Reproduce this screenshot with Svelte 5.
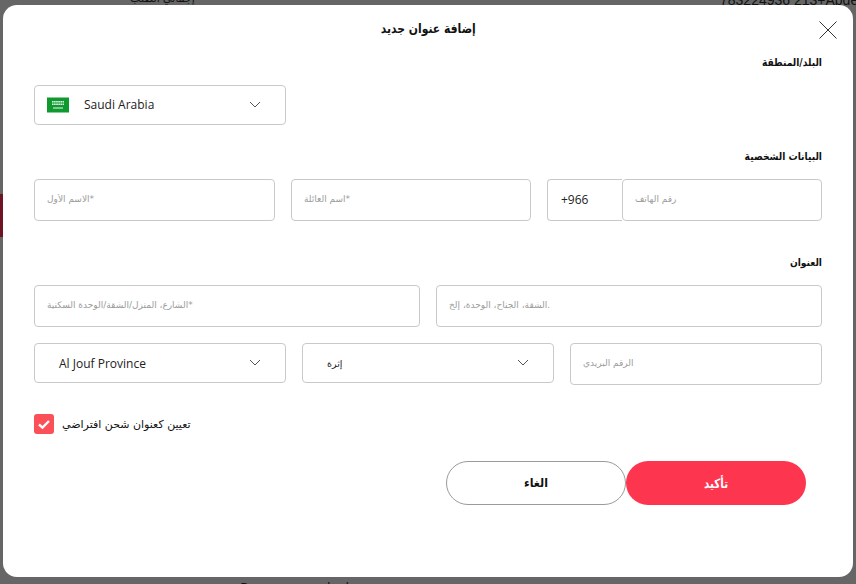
<script>
  const chevron = 'M1 1l5 5 5-5';
</script>

<div class="page">
  <div class="behind" aria-hidden="true">
    <span class="b b1" dir="rtl">إجمالي الطلب</span>
    <span class="b b2">783224936 213+Abde</span>
    <span class="b b3">Recommended</span>
    <i class="strip"></i>
  </div>

  <div class="modal">
    <header class="head">
      <h1 dir="rtl">إضافة عنوان جديد</h1>
      <button class="close" aria-label="إغلاق">
        <svg width="18" height="18" viewBox="0 0 18 18"><path d="M.5.5l17 17M17.5.5l-17 17" stroke="#333" stroke-width="1" fill="none"/></svg>
      </button>
    </header>

    <section class="form">
      <h2 class="l1" dir="rtl">البلد/المنطقة</h2>
      <div class="row r-country">
        <div class="select country">
          <svg class="flag" width="22" height="16" viewBox="0 0 22 16">
            <rect width="22" height="15" y=".5" fill="#0f9a30"/>
            <path d="M5 4.5h12M5 6h12M5 7.5h12" stroke="#e6f6e8" stroke-width="1" stroke-dasharray="1.6 .5" fill="none"/>
            <path d="M6 11h10" stroke="#eef8ef" stroke-width="1" fill="none"/>
          </svg>
          <span class="val up">Saudi Arabia</span>
          <svg class="chev" width="12" height="7" viewBox="0 0 12 7"><path d={chevron} stroke="#555" fill="none"/></svg>
        </div>
      </div>

      <h2 class="l2" dir="rtl">البيانات الشخصية</h2>
      <div class="row r-name">
        <input class="field first" dir="rtl" placeholder="*الاسم الأول" />
        <input class="field family" dir="rtl" placeholder="*اسم العائلة" />
        <div class="phone">
          <span class="code">+966</span>
          <input class="field num" dir="rtl" placeholder="رقم الهاتف" />
        </div>
      </div>

      <h2 class="l3" dir="rtl">العنوان</h2>
      <div class="row r-addr">
        <input class="field half" dir="rtl" placeholder="*الشارع، المنزل/الشقة/الوحدة السكنية" />
        <input class="field half" dir="rtl" placeholder=".الشقة، الجناح، الوحدة، إلخ" />
      </div>
      <div class="row r-city">
        <div class="select prov">
          <span class="val">Al Jouf Province</span>
          <svg class="chev" width="12" height="7" viewBox="0 0 12 7"><path d={chevron} stroke="#555" fill="none"/></svg>
        </div>
        <div class="select prov">
          <span class="val ar" dir="rtl">إثرة</span>
          <svg class="chev" width="12" height="7" viewBox="0 0 12 7"><path d={chevron} stroke="#555" fill="none"/></svg>
        </div>
        <input class="field zip" dir="rtl" placeholder="الرقم البريدي" />
      </div>

      <label class="check">
        <span class="box">
          <svg width="14" height="11" viewBox="0 0 14 11"><path d="M2 5.5l3.5 3.2 6.5-6.7" stroke="#fff" stroke-width="2.4" fill="none"/></svg>
        </span>
        <span class="check-text" dir="rtl">تعيين كعنوان شحن افتراضي</span>
      </label>

      <div class="actions">
        <button class="btn cancel"><span dir="rtl">الغاء</span></button>
        <button class="btn ok"><span dir="rtl">تأكيد</span></button>
      </div>
    </section>
  </div>
</div>

<style>
  :global(body) {
    margin: 0;
    background: #666;
  }
  .page {
    position: relative;
    width: 856px;
    height: 584px;
    overflow: hidden;
    padding: 5px 0 0 3px;
    box-sizing: border-box;
    font-family: "Open Sans", "DejaVu Sans", sans-serif;
  }
  .behind { position: absolute; inset: 0; }
  .b { position: absolute; color: #111; font-size: 14px; line-height: 16px; white-space: nowrap; }
  .b1 { left: 130px; top: -10px; font-size: 11px; }
  .b2 { left: 720px; top: -8px; font-family: "Liberation Sans", sans-serif; font-size: 14px; }
  .b3 { left: 240px; top: 580px; font-size: 14px; letter-spacing: 1px; }
  .strip { position: absolute; left: 0; top: 194px; width: 3px; height: 43px; background: #6e1425; }

  .modal {
    position: relative;
    width: 850px;
    height: 572px;
    background: #fff;
    border-radius: 14px;
    overflow: hidden;
  }
  .head {
    position: relative;
    height: 48px;
    display: flex;
    justify-content: center;
  }
  h1 {
    margin: 15px 0 0;
    font-size: 13px;
    line-height: 18px;
    font-weight: 700;
    color: #111;
    font-family: "DejaVu Sans", sans-serif;
    transform: scaleX(0.83);
  }
  .close {
    position: absolute;
    right: 16px;
    top: 16px;
    padding: 0;
    width: 18px;
    height: 18px;
    border: 0;
    background: none;
    line-height: 0;
  }
  .form {
    padding: 0 31px;
  }
  h2 {
    margin: 0;
    font-size: 10.5px;
    line-height: 16px;
    font-weight: 700;
    color: #111;
    text-align: right;
    font-family: "DejaVu Sans", sans-serif;
    transform: scaleX(0.87);
    transform-origin: 100% 50%;
  }
  .l1 { padding-top: 1px; margin-bottom: 15px; }
  .l2 { margin-top: 23px; margin-bottom: 15px; }
  .l3 { margin-top: 33px; margin-bottom: 15px; }
  .row { display: flex; gap: 16px; }
  .r-addr { margin-bottom: 16px; }
  .r-city { align-items: flex-start; }
  .select {
    box-sizing: border-box;
    width: 252px;
    height: 40px;
    display: flex;
    align-items: center;
    border: 1px solid #c9c9c9;
    border-radius: 4px;
    background: #fff;
    font-size: 12px;
    color: #222;
  }
  .country { padding: 0 24px 0 12px; }
  .flag { flex: none; margin-right: 15px; }
  .prov { padding: 0 24px 0 24px; }
  .val { flex: 1; }
  .up { padding-bottom: 2px; }
  .ar { text-align: right; flex: none; font-size: 9.5px; font-family: "DejaVu Sans", sans-serif; margin-right: auto; }
  .chev { flex: none; margin-bottom: 2px; }
  .field {
    box-sizing: border-box;
    height: 42px;
    border: 1px solid #c9c9c9;
    border-radius: 4px;
    padding: 0 12px 2px;
    background: #fff;
    outline: none;
    text-align: left;
    font-size: 9px;
    font-family: "DejaVu Sans", sans-serif;
    color: #222;
    min-width: 0;
  }
  .field::placeholder { color: #9c9c9c; opacity: 1; }
  .first { width: 241px; }
  .family { width: 240px; }
  .phone { display: flex; width: 275px; }
  .code {
    box-sizing: border-box;
    width: 75px;
    height: 42px;
    padding: 0 0 2px 13px;
    border: 1px solid #c9c9c9;
    border-right: 0;
    border-radius: 4px 0 0 4px;
    display: flex;
    align-items: center;
    font-size: 12px;
    color: #222;
  }
  .num { width: 200px; }
  .half { width: 386px; }
  .zip { width: 252px; }
  .check {
    margin-top: 29px;
    display: flex;
    align-items: center;
    gap: 8px;
  }
  .box {
    width: 20px;
    height: 20px;
    border-radius: 3px;
    background: #fb5058;
    display: flex;
    align-items: center;
    justify-content: center;
  }
  .check-text {
    font-size: 11px;
    font-family: "DejaVu Sans", sans-serif;
    color: #111;
  }
  .actions {
    margin: 27px 16px 0 0;
    display: flex;
    justify-content: flex-end;
  }
  .btn {
    box-sizing: border-box;
    width: 180px;
    height: 44px;
    border-radius: 22px;
    font-size: 12px;
    font-weight: 700;
    font-family: "DejaVu Sans", sans-serif;
    padding: 0;
  }
  .btn span { display: inline-block; }
  .cancel { background: #fff; border: 1px solid #9a9a9a; color: #111; }
  .cancel span { transform: scaleX(0.92); }
  .ok { background: #fe354f; border: 0; color: #fff; font-size: 13px; }
  .ok span { transform: scaleX(0.8); }
</style>
